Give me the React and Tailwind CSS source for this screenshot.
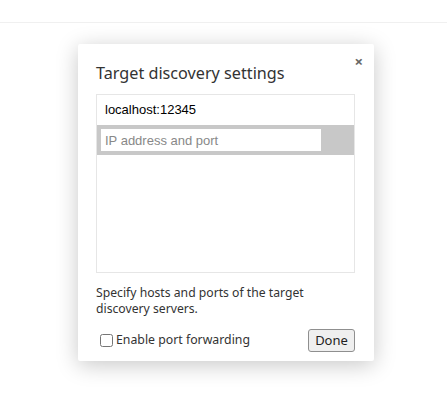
import React from "react";

export default function App() {
  return (
    <div className="relative w-[447px] h-[412px] bg-white overflow-hidden">
      <div className="h-[23px] border-b border-[#f0f0f0]" />
      <div className="pt-[21px] pl-[78px]">
        <div
          className="w-[296px] h-[317px] bg-white rounded-[2px] shadow-[0_4px_22px_rgba(0,0,0,0.22)] relative flex flex-col pl-[18px] pr-[19px]"
          style={{ fontFamily: '"Noto Sans", sans-serif' }}
        >
          <button className="absolute right-[11px] top-[10px] text-[#666] text-[15px] leading-none font-bold">
            ×
          </button>
          <div className="pt-[17px] text-[16.2px] leading-[24px] text-[#333]">
            Target discovery settings
          </div>
          <div className="mt-[9px] h-[179px] border border-[#e6e6e6] flex flex-col">
            <div
              className="h-[30px] flex items-center pl-[8px] text-[13px] text-black"
              style={{ fontFamily: '"Liberation Sans", Arial, sans-serif' }}
            >
              localhost:12345
            </div>
            <div className="h-[30px] bg-[#c8c8c8] flex items-center pl-[3px]">
              <input
                className="w-[222px] h-[24px] bg-white border border-[#c8c8c8] px-[4px] text-[13px] outline-none placeholder:text-[#888]"
                style={{ fontFamily: '"Liberation Sans", Arial, sans-serif' }}
                placeholder="IP address and port"
              />
            </div>
          </div>
          <div className="mt-[12px] text-[12.2px] leading-[16px] text-[#333]">
            Specify hosts and ports of the target discovery servers.
          </div>
          <div className="mt-[12px] flex items-center justify-between">
            <label className="flex items-center gap-[3px] pl-[4px] text-[12.3px] text-[#333]">
              <input type="checkbox" className="w-[13px] h-[13px] m-0" />
              Enable port forwarding
            </label>
            <button className="h-[23px] w-[47px] bg-[#efefef] border border-[#8f8f8f] rounded-[3px] text-[13px] text-[#222]">
              Done
            </button>
          </div>
        </div>
      </div>
    </div>
  );
}
